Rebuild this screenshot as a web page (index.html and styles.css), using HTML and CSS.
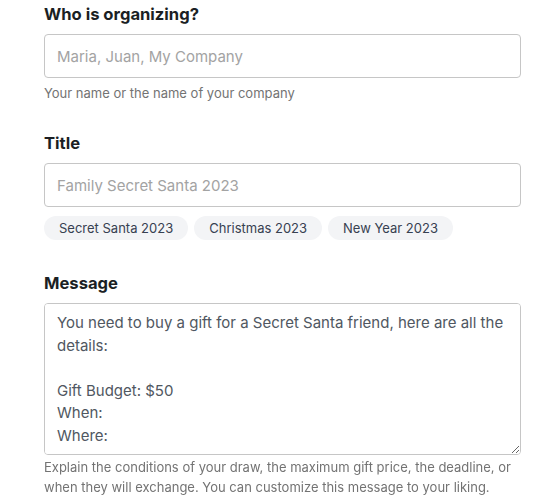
FILE: index.html
```html
<!DOCTYPE html>
<html lang="en">
<head>
    <meta charset="UTF-8">
    <meta name="viewport" content="width=device-width, initial-scale=1.0">
    <title>Secret Santa - Details</title>
    <link rel="stylesheet" href="styles.css">
</head>
<body>
    <form class="draw-form">
        <div class="field">
            <label class="field-label" for="organizer">Who is organizing?</label>
            <input class="field-input" type="text" id="organizer" placeholder="Maria, Juan, My Company">
            <p class="hint">Your name or the name of your company</p>
        </div>

        <div class="field">
            <label class="field-label" for="title">Title</label>
            <input class="field-input" type="text" id="title" placeholder="Family Secret Santa 2023">
            <div class="chips">
                <button type="button" class="chip">Secret Santa 2023</button>
                <button type="button" class="chip">Christmas 2023</button>
                <button type="button" class="chip">New Year 2023</button>
            </div>
        </div>

        <div class="field">
            <label class="field-label" for="message">Message</label>
            <textarea class="field-input field-textarea" id="message">You need to buy a gift for a Secret Santa friend, here are all the details:

Gift Budget: $50
When:
Where:</textarea>
            <p class="hint hint-long">Explain the conditions of your draw, the maximum gift price, the deadline, or when they will exchange. You can customize this message to your liking.</p>
        </div>
    </form>
    <div class="footer-bar"></div>
</body>
</html>
```

FILE: styles.css
```css
body { margin: 0; font-family: Inter, "Noto Sans", sans-serif; color: #1f2328; background: #fff; }
.draw-form { width: 477px; margin-left: 44px; padding-top: 2px; }
.field { display: flex; flex-direction: column; margin-bottom: 28px; }
.field-label { font-size: 16.6px; font-weight: 700; line-height: 24px; margin-bottom: 8px; color: #1b1f24; }
.field-input { box-sizing: border-box; width: 100%; height: 44px; padding: 0 12px; border: 1px solid #c6c6c6; border-radius: 4px; font-family: inherit; font-size: 15px; color: #505761; background: #fff; }
.field-input::placeholder { color: #a3a3a3; }
.field-textarea { height: 152px; padding: 8px 12px; line-height: 22.5px; resize: vertical; }
.hint { margin: 5px 0 0; font-size: 13px; line-height: 20px; color: #737373; }
.hint-long { margin-top: 3px; line-height: 19.5px; }
.chips { display: flex; gap: 6px; margin: 9px 0 3px; }
.chip { height: 24px; padding: 0 15px; border: none; border-radius: 12px; background: #f3f4f6; font-family: inherit; font-size: 13px; color: #374151; cursor: pointer; }
.chip:hover { background: #e5e7eb; }
.footer-bar { height: 40px; background: #ebe9e5; }
```
